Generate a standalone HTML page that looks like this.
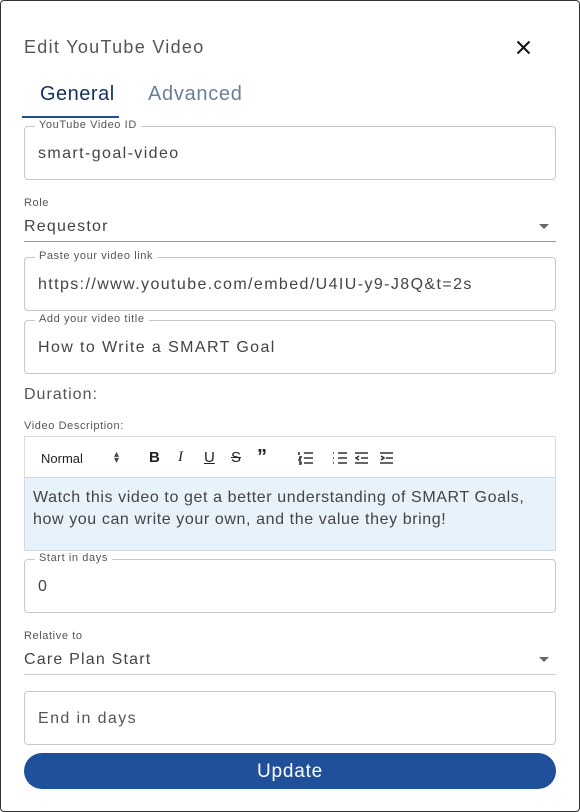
<!DOCTYPE html>
<html><head><style>
*{box-sizing:border-box;margin:0;padding:0}
body{width:580px;height:812px;background:#fff;font-family:"Liberation Sans",sans-serif;position:relative;overflow:hidden;color:#444}
.frame{position:absolute;left:0;top:0;width:580px;height:812px;border:1px solid #333;border-radius:4px}
.a{position:absolute}
.box{position:absolute;left:24px;width:532px;height:54px;border:1px solid #c8c8c8;border-radius:4px}
.lab{position:absolute;left:10px;top:-8px;background:#fff;padding:0 4px;font-size:11px;color:#555;letter-spacing:.6px}
.val{position:absolute;left:13px;top:18px;font-size:16px;color:#444;letter-spacing:1.4px}
.sm{font-size:11px;color:#555;letter-spacing:.6px}
.sel{font-size:16px;color:#444;letter-spacing:1.2px}
.ul{position:absolute;left:24px;width:532px;height:1px;background:#999}
.arr{position:absolute;left:539px;width:0;height:0;border-left:5px solid transparent;border-right:5px solid transparent;border-top:5px solid #666}
.tb{position:absolute;top:13px;font-size:15px;color:#222}
</style></head><body>
<div class="frame"></div>
<div class="a" style="left:24px;top:37px;font-size:18px;color:#555;letter-spacing:1.3px">Edit YouTube Video</div>
<svg class="a" style="left:516px;top:40px" width="15" height="15" viewBox="0 0 15 15"><path d="M1.5 1.5L13.5 13.5M13.5 1.5L1.5 13.5" stroke="#111" stroke-width="2"/></svg>
<div class="a" style="left:40px;top:83px;font-size:20px;color:#15305a;letter-spacing:.5px">General</div>
<div class="a" style="left:148px;top:83px;font-size:20px;color:#6b7f99;letter-spacing:.7px">Advanced</div>
<div class="a" style="left:22px;top:116px;width:97px;height:2px;background:#1f4f91"></div>

<div class="box" style="top:126px"><div class="lab">YouTube Video ID</div><div class="val">smart-goal-video</div></div>

<div class="a sm" style="left:24px;top:197px">Role</div>
<div class="a sel" style="left:24px;top:218px">Requestor</div>
<div class="arr" style="top:224px"></div>
<div class="ul" style="top:241px"></div>

<div class="box" style="top:257px"><div class="lab">Paste your video link</div><div class="val">https://www.youtube.com/embed/U4IU-y9-J8Q&amp;t=2s</div></div>
<div class="box" style="top:320px"><div class="lab">Add your video title</div><div class="val">How to Write a SMART Goal</div></div>

<div class="a" style="left:24px;top:386px;font-size:16px;color:#555;letter-spacing:1px">Duration:</div>
<div class="a sm" style="left:24px;top:420px">Video Description:</div>

<div class="a" style="left:24px;top:436px;width:532px;height:42px;border:1px solid #ddd;border-bottom:none"></div>
<div class="tb" style="left:41px;font-size:13px;top:451px;color:#222">Normal</div>
<div class="tb" style="left:114px;top:449px;font-size:10px;color:#444">&#x25B4;</div>
<div class="tb" style="left:114px;top:455px;font-size:10px;color:#444">&#x25BE;</div>
<div class="tb" style="left:149px;top:449px;font-weight:bold">B</div>
<div class="tb" style="left:178px;top:449px;font-style:italic;font-family:'Liberation Serif',serif">I</div>
<div class="tb" style="left:204px;top:449px;text-decoration:underline">U</div>
<div class="tb" style="left:231px;top:449px;text-decoration:line-through">S</div>
<div class="tb" style="left:257px;top:446px;font-weight:bold;font-size:20px">&#8221;</div>
<svg class="a" style="left:298px;top:451px" width="100" height="14" viewBox="0 0 100 14" stroke="#333" stroke-width="1.6" fill="none">
<path d="M6 2H15M6 7H15M6 12H15M1 1V4M1 6H3L1 9H3M1 11H3V13H1"/>
<path d="M40 2H49M40 7H49M40 12H49M35 2H36M35 7H36M35 12H36"/>
<path d="M57 2H70M63 7H70M57 12H70M61 5L58 7L61 9"/>
<path d="M82 2H95M88 7H95M82 12H95M83 5L86 7L83 9"/>
</svg>
<div class="a" style="left:24px;top:477px;width:532px;height:74px;background:#e8f2fa;border:1px solid #cfdbe6"></div>
<div class="a" style="left:33px;top:487px;font-size:16px;line-height:22px;color:#444;letter-spacing:.6px;width:500px">Watch this video to get a better understanding of SMART Goals, how you can write your own, and the value they bring!</div>

<div class="box" style="top:559px"><div class="lab">Start in days</div><div class="val">0</div></div>

<div class="a sm" style="left:24px;top:630px">Relative to</div>
<div class="a sel" style="left:24px;top:651px">Care Plan Start</div>
<div class="arr" style="top:657px"></div>
<div class="ul" style="top:674px;background:#ccc"></div>

<div class="box" style="top:691px"><div class="val" style="color:#555">End in days</div></div>

<div class="a" style="left:24px;top:753px;width:532px;height:36px;background:#1f5099;border-radius:18px;color:#fff;font-size:19px;text-align:center;line-height:37px;letter-spacing:.8px">Update</div>
</body></html>
